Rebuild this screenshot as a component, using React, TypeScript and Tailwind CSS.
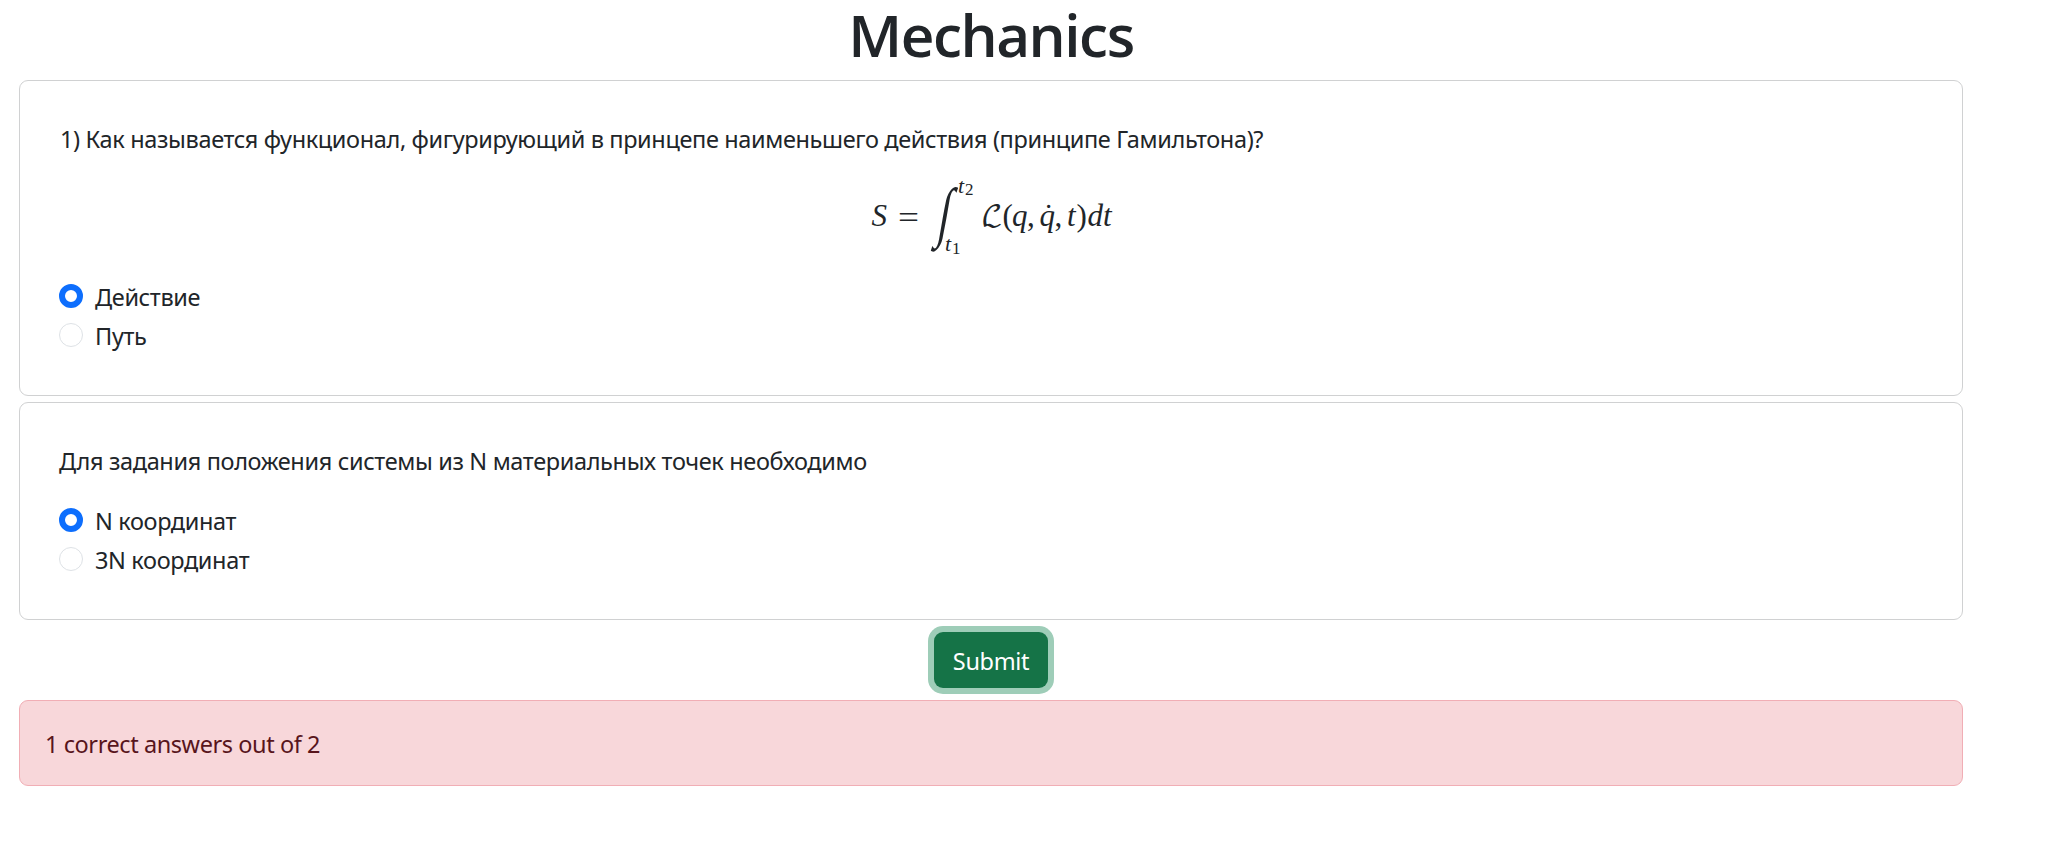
import { useState } from 'react';

function Option({ label, name, checked, onSelect }: { label: string; name: string; checked: boolean; onSelect: () => void }) {
  return (
    <label className="mb-[3px] flex h-9 items-start gap-3">
      <input
        type="radio"
        name={name}
        checked={checked}
        onChange={onSelect}
        className="mt-[5px] size-6 shrink-0 appearance-none rounded-full border border-[#dee2e6] bg-white checked:border-[6px] checked:border-[#0d6efd]"
      />
      <span className="whitespace-nowrap">{label}</span>
    </label>
  );
}

function Options({ name, labels }: { name: string; labels: string[] }) {
  const [selected, setSelected] = useState(0);
  return (
    <div>
      {labels.map((label, i) => (
        <Option key={label} name={name} label={label} checked={selected === i} onSelect={() => setSelected(i)} />
      ))}
    </div>
  );
}

function Formula() {
  return (
    <svg className="ml-2 h-[95px] w-[270px] fill-[#212529] font-['Liberation_Serif',serif] tracking-normal" viewBox="0 0 270 95">
      <g fontSize="31" fontStyle="italic">
        <text x="11.5" y="55.5">S</text>
        <text x="152" y="55.5">q</text>
        <text x="179.5" y="55.5">q̇</text>
        <text x="207" y="55.5">t</text>
        <text x="227.5" y="55.5">d</text>
        <text x="243" y="55.5">t</text>
      </g>
      <g fontSize="31">
        <text transform="translate(38 57.8) scale(1.2 1)">=</text>
        <text x="142.5" y="55.5">(</text>
        <text x="167" y="55.5">,</text>
        <text x="194.5" y="55.5">,</text>
        <text x="216.5" y="55.5">)</text>
      </g>
      <g fontSize="22">
        <text x="98" y="23" fontStyle="italic">t</text>
        <text x="105" y="25" fontSize="17">2</text>
        <text x="85" y="81" fontStyle="italic">t</text>
        <text x="92" y="83.5" fontSize="17">1</text>
      </g>
      <text x="121" y="55.5" fontSize="29" className="font-['DejaVu_Math_TeX_Gyre',serif]">ℒ</text>
      <text fontSize="66" transform="translate(76 64) skewX(-10) scale(0.65 1)">∫</text>
    </svg>
  );
}

export default function App() {
  return (
    <main className="flex min-h-[842px] w-[1982px] flex-col bg-white px-[19px] font-['Noto_Sans',sans-serif] text-[23.5px] leading-9 tracking-[-0.35px] text-[#212529]">
      <h1 className="h-20 text-center font-['Open_Sans',sans-serif] text-[58.5px] leading-[69px] font-semibold tracking-[-1.5px]">Mechanics</h1>

      <section className="h-[316px] rounded-[9px] border border-[#d0d1d2] px-[39px] pt-10">
        <p className="pl-px tracking-[-0.36px]">1) Как называется функционал, фигурирующий в принцепе наименьшего действия (принципе Гамильтона)?</p>
        <div className="flex h-[122px] justify-center pt-[13px]">
          <Formula />
        </div>
        <Options name="functional" labels={['Действие', 'Путь']} />
      </section>

      <section className="mt-1.5 h-[218px] rounded-[9px] border border-[#d0d1d2] px-[39px] pt-10">
        <p className="mb-6">Для задания положения системы из N материальных точек необходимо</p>
        <Options name="coordinates" labels={['N координат', '3N координат']} />
      </section>

      <div className="flex h-20 justify-center pt-3">
        <button className="h-14 w-[114px] rounded-[9px] bg-[#157347] pt-px text-white ring-[6px] ring-[#9ecdb8]">Submit</button>
      </div>

      <div className="h-[86px] rounded-[9px] border border-[#f1aeb5] bg-[#f8d7da] px-[25px] pt-[25px] tracking-[-0.42px] text-[#58151c]">
        1 correct answers out of 2
      </div>
    </main>
  );
}
